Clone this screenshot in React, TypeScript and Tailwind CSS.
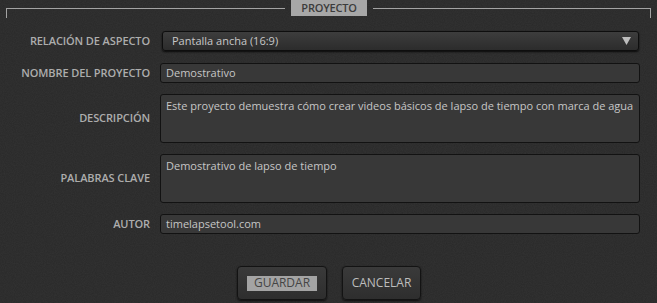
import React from "react";

const font = { fontFamily: '"Open Sans", "Liberation Sans", Arial, sans-serif' };

function Label({ children }: { children: React.ReactNode }) {
  return (
    <div className="w-[150px] shrink-0 text-right text-[11px] font-semibold uppercase tracking-[-0.1px] text-[#adadad]">
      {children}
    </div>
  );
}

function Noise() {
  return (
    <svg className="pointer-events-none absolute inset-0" width="657" height="303">
      <filter id="n">
        <feTurbulence type="fractalNoise" baseFrequency="0.9" numOctaves="2" seed="3" />
        <feColorMatrix type="matrix" values="0 0 0 0 0.6  0 0 0 0 0.6  0 0 0 0 0.6  0 0 0 0.35 0" />
      </filter>
      <rect width="657" height="303" filter="url(#n)" opacity="0.18" />
    </svg>
  );
}

export default function App() {
  return (
    <div
      className="relative h-[303px] w-[657px] overflow-hidden bg-[#292929] text-[#c6c6c6]"
      style={font}
    >
      <Noise />
      <div className="relative">
        <div className="flex items-start">
          <div className="ml-[6px] mt-[8px] h-[10px] w-[279px] border-l border-t border-[#a3a3a3]" />
          <div className="ml-[6px] flex h-[16px] w-[76px] items-center justify-center bg-[#a7a7a7] text-[11px] font-semibold tracking-[-0.2px] text-[#3c3c3c]">
            PROYECTO
          </div>
          <div className="ml-[6px] mt-[8px] h-[10px] w-[278px] border-r border-t border-[#a3a3a3]" />
        </div>

        <div className="mt-[13px] flex flex-col">
          <div className="flex items-center gap-[12px]">
            <Label>Relación de aspecto</Label>
            <div className="flex h-[20px] w-[477px] items-center justify-between rounded-[3px] border border-[#0e0e0e] bg-gradient-to-b from-[#3d3d3d] to-[#2c2c2c] pl-[9px] pr-[7px] text-[11px] text-[#c8c8c8] shadow-[0_1px_2px_rgba(0,0,0,0.8)]">
              <span>Pantalla ancha (16:9)</span>
              <svg width="9" height="8" viewBox="0 0 9 8">
                <path d="M0 0 H9 L4.5 8 Z" fill="#bdbdbd" />
              </svg>
            </div>
          </div>

          <div className="mt-[12px] flex items-center gap-[10px]">
            <Label>Nombre del proyecto</Label>
            <div className="flex h-[20px] w-[480px] items-center rounded-[3px] border border-[#121212] bg-[#383838] pl-[5px] text-[11px]">
              Demostrativo
            </div>
          </div>

          <div className="mt-[11px] flex items-center gap-[10px]">
            <Label>Descripción</Label>
            <div className="h-[49px] w-[480px] rounded-[3px] border border-[#121212] bg-[#383838] pl-[5px] pt-[3px] text-[11px]">
              Este proyecto demuestra cómo crear videos básicos de lapso de tiempo con marca de agua
            </div>
          </div>

          <div className="mt-[11px] flex items-center gap-[10px]">
            <Label>Palabras clave</Label>
            <div className="h-[49px] w-[480px] rounded-[3px] border border-[#121212] bg-[#383838] pl-[5px] pt-[3px] text-[11px]">
              Demostrativo de lapso de tiempo
            </div>
          </div>

          <div className="mt-[11px] flex items-center gap-[10px]">
            <Label>Autor</Label>
            <div className="flex h-[20px] w-[480px] items-center rounded-[3px] border border-[#121212] bg-[#383838] pl-[5px] text-[11px]">
              timelapsetool.com
            </div>
          </div>

          <div className="mt-[32px] flex gap-[15px] pl-[237px]">
            <div className="flex h-[34px] w-[90px] items-center justify-center rounded-[4px] border border-[#131313] bg-gradient-to-b from-[#3a3a3a] to-[#2e2e2e] shadow-[0_1px_2px_rgba(0,0,0,0.7)]">
              <div className="flex h-[15px] w-[70px] items-center justify-center bg-[#a4a4a4] text-[12px] text-[#454545]">
                GUARDAR
              </div>
            </div>
            <div className="flex h-[34px] w-[79px] items-center justify-center rounded-[4px] border border-[#131313] bg-gradient-to-b from-[#3a3a3a] to-[#2e2e2e] text-[12px] text-[#bdbdbd] shadow-[0_1px_2px_rgba(0,0,0,0.7)]">
              CANCELAR
            </div>
          </div>
        </div>
      </div>
    </div>
  );
}
